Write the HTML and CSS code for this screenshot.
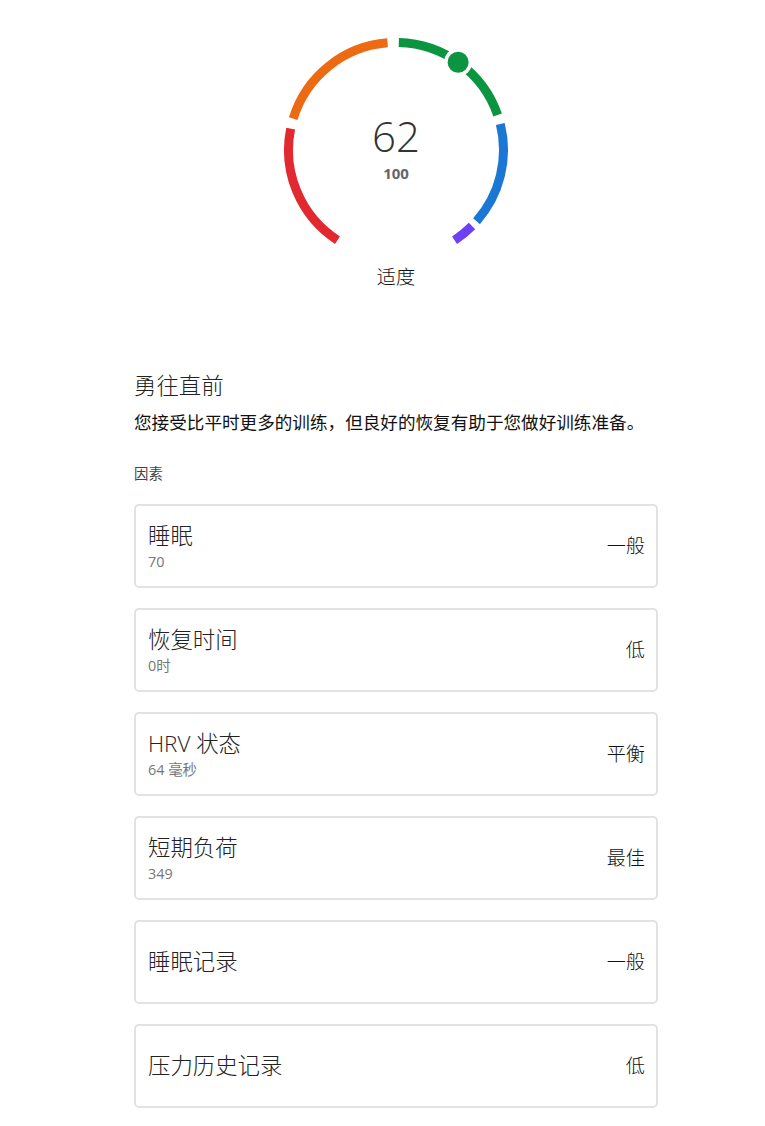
FILE: index.html
```html
<!DOCTYPE html>
<html lang="zh-CN">
<head>
<meta charset="utf-8">
<title>训练准备</title>
<link rel="stylesheet" href="styles.css">
</head>
<body>
<main class="page">
  <section class="gauge-block">
    <div class="gauge">
      <svg width="232" height="216" viewBox="0 0 232 216" aria-hidden="true">
        <g fill="none" stroke-width="9" stroke-linecap="butt">
          <path d="M57.45 206.16 A107.5 107.5 0 0 1 10.66 94.57" stroke="#e1292f"/>
          <path d="M13.20 84.57 A107.5 107.5 0 0 1 107.57 8.83" stroke="#ec6a12"/>
          <path d="M118.81 8.54 A107.5 107.5 0 0 1 217.64 81.00" stroke="#0c9541"/>
          <path d="M220.31 89.99 A107.5 107.5 0 0 1 196.51 187.23" stroke="#1b77d3"/>
          <path d="M192.01 192.01 A107.5 107.5 0 0 1 174.55 206.16" stroke="#6d3ff5"/>
        </g>
        <circle cx="178.12" cy="28.27" r="14" fill="#fff"/>
        <circle cx="178.12" cy="28.27" r="10.5" fill="#0c9541"/>
      </svg>
      <div class="readout">
        <div class="score">62</div>
        <div class="max">100</div>
      </div>
    </div>
    <div class="gauge-label">适度</div>
  </section>

  <h1 class="headline">勇往直前</h1>
  <p class="desc">您接受比平时更多的训练，但良好的恢复有助于您做好训练准备。</p>

  <div class="factors-title">因素</div>
  <ul class="factors">
    <li class="card">
      <div class="card-main"><div class="name">睡眠</div><div class="sub">70</div></div>
      <div class="level">一般</div>
    </li>
    <li class="card">
      <div class="card-main"><div class="name">恢复时间</div><div class="sub">0时</div></div>
      <div class="level">低</div>
    </li>
    <li class="card">
      <div class="card-main"><div class="name">HRV 状态</div><div class="sub">64 毫秒</div></div>
      <div class="level">平衡</div>
    </li>
    <li class="card">
      <div class="card-main"><div class="name">短期负荷</div><div class="sub">349</div></div>
      <div class="level">最佳</div>
    </li>
    <li class="card">
      <div class="card-main"><div class="name">睡眠记录</div></div>
      <div class="level">一般</div>
    </li>
    <li class="card">
      <div class="card-main"><div class="name">压力历史记录</div></div>
      <div class="level">低</div>
    </li>
  </ul>
</main>
</body>
</html>
```
FILE: styles.css
```css
* { box-sizing: border-box; }

body {
  margin: 0;
  background: #fff;
  color: #222;
  font-family: "Open Sans", "Noto Sans CJK SC", sans-serif;
}

.page {
  width: 524px;
  margin-left: 134px;
  padding-top: 34px;
  padding-bottom: 18px;
}

.gauge-block {
  display: flex;
  flex-direction: column;
  align-items: center;
}

.gauge {
  position: relative;
  width: 232px;
  height: 216px;
}

.gauge svg { display: block; }

.readout {
  position: absolute;
  top: 0;
  left: 0;
  right: 0;
  padding-top: 81px;
  display: flex;
  flex-direction: column;
  align-items: center;
}

.score {
  font-size: 42px;
  line-height: 42px;
  font-weight: 300;
  color: #333;
}

.max {
  margin-top: 7px;
  font-size: 15px;
  line-height: 18px;
  font-weight: 700;
  color: #666;
}

.gauge-label {
  margin-top: 14.5px;
  font-size: 19.2px;
  line-height: 24px;
  font-weight: 300;
  color: #111;
}

.headline {
  margin: 82.5px 0 0;
  font-size: 22.4px;
  line-height: 30px;
  font-weight: 300;
  color: #222;
}

.desc {
  margin: 8px 0 0;
  font-size: 17.6px;
  line-height: 26px;
  color: #111;
}

.factors-title {
  margin-top: 29px;
  font-size: 14.4px;
  line-height: 20px;
  color: #444;
}

.factors {
  list-style: none;
  margin: 20px 0 0;
  padding: 0;
  display: flex;
  flex-direction: column;
  gap: 20px;
}

.card {
  height: 84px;
  border: 2px solid #e2e2e2;
  border-radius: 5px;
  padding: 0 11px 0 12px;
  display: flex;
  align-items: center;
  justify-content: space-between;
}

.name {
  font-size: 22.4px;
  line-height: 28px;
  font-weight: 300;
  color: #222;
}

.sub {
  margin-top: 3px;
  font-size: 14.4px;
  line-height: 18px;
  color: #777;
}

.level {
  font-size: 19.2px;
  line-height: 24px;
  font-weight: 300;
  color: #111;
}
```
